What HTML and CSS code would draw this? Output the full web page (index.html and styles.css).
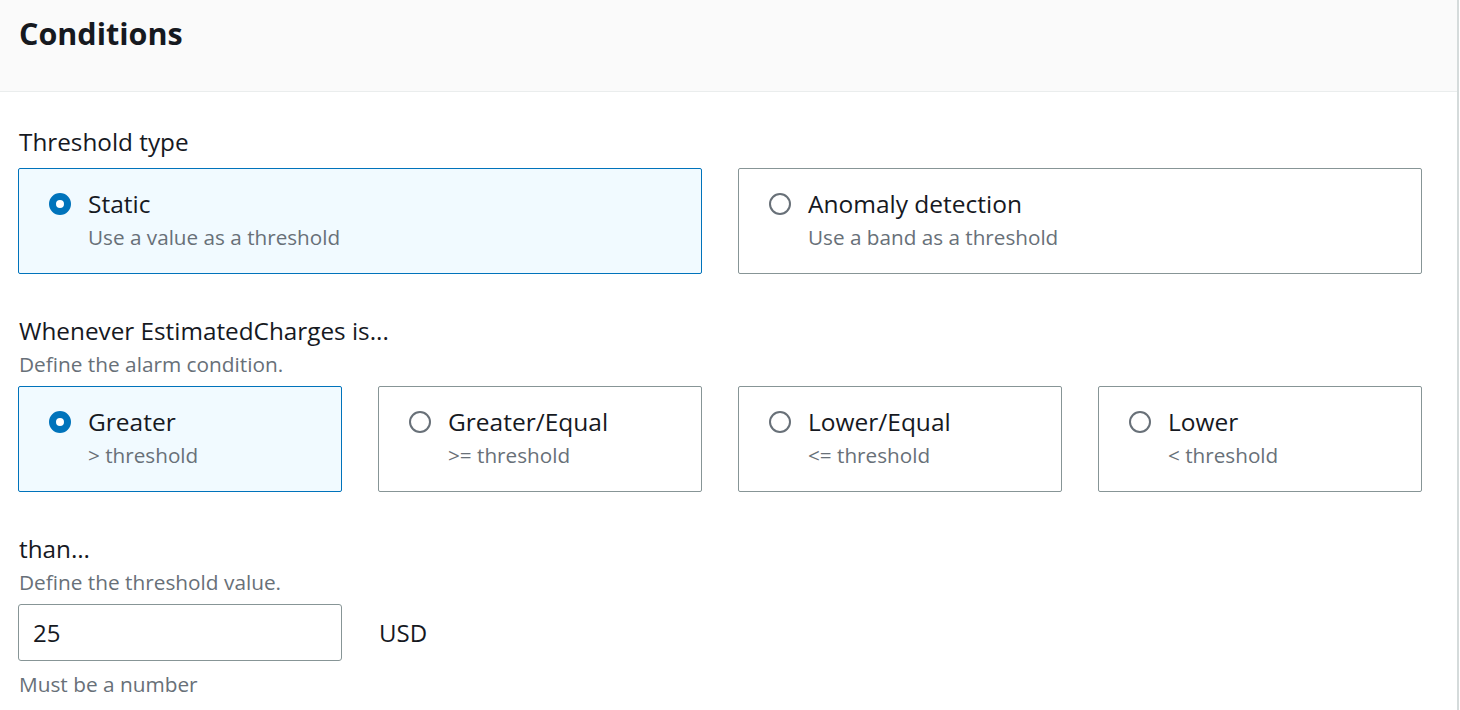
FILE: index.html
```html
<!DOCTYPE html>
<html>
<head>
<meta charset="utf-8">
<link rel="stylesheet" href="styles.css">
</head>
<body>
<div class="panel">
  <div class="header"><h2 class="title">Conditions</h2></div>
  <div class="content">
    <div class="field field-type">
      <div class="label">Threshold type</div>
      <div class="tiles two">
        <div class="tile selected">
          <span class="radio checked"></span>
          <div class="tile-text"><div class="tile-title">Static</div><div class="tile-desc">Use a value as a threshold</div></div>
        </div>
        <div class="tile">
          <span class="radio"></span>
          <div class="tile-text"><div class="tile-title">Anomaly detection</div><div class="tile-desc">Use a band as a threshold</div></div>
        </div>
      </div>
    </div>
    <div class="field field-cond">
      <div class="label">Whenever EstimatedCharges is...</div>
      <div class="desc">Define the alarm condition.</div>
      <div class="tiles four">
        <div class="tile selected">
          <span class="radio checked"></span>
          <div class="tile-text"><div class="tile-title">Greater</div><div class="tile-desc">&gt; threshold</div></div>
        </div>
        <div class="tile">
          <span class="radio"></span>
          <div class="tile-text"><div class="tile-title">Greater/Equal</div><div class="tile-desc">&gt;= threshold</div></div>
        </div>
        <div class="tile">
          <span class="radio"></span>
          <div class="tile-text"><div class="tile-title">Lower/Equal</div><div class="tile-desc">&lt;= threshold</div></div>
        </div>
        <div class="tile">
          <span class="radio"></span>
          <div class="tile-text"><div class="tile-title">Lower</div><div class="tile-desc">&lt; threshold</div></div>
        </div>
      </div>
    </div>
    <div class="field field-than">
      <div class="label">than…</div>
      <div class="desc desc-than">Define the threshold value.</div>
      <div class="input-row">
        <div class="input">25</div>
        <div class="unit">USD</div>
      </div>
      <div class="hint">Must be a number</div>
    </div>
  </div>
</div>
</body>
</html>
```

FILE: styles.css
```css
html, body {
  margin: 0;
  padding: 0;
  background: #ffffff;
}
body {
  font-family: "Open Sans", "Noto Sans", sans-serif;
  color: #16191f;
}
.panel {
  width: 1457px;
  height: 710px;
  border-right: 2px solid #d5dbdb;
  overflow: hidden;
}
.header {
  height: 92px;
  box-sizing: border-box;
  background: #fafafa;
  border-bottom: 1px solid #eaeded;
  padding: 13px 19px 0;
}
.title {
  margin: 0;
  font-size: 30.5px;
  line-height: 40px;
  font-weight: 700;
}
.content {
  padding: 0 35px 0 18px;
}
.label {
  font-size: 24.3px;
  line-height: 34px;
  padding-left: 1px;
}
.desc {
  font-size: 20.8px;
  line-height: 32px;
  color: #687078;
  padding-left: 1px;
}
.field-type { padding-top: 33px; }
.field-type .label { margin-bottom: 9px; }
.field-cond { padding-top: 40px; }
.field-cond .desc { margin-bottom: 6px; }
.tiles {
  display: grid;
  gap: 36px;
}
.tiles.two { grid-template-columns: 1fr 1fr; }
.tiles.four { grid-template-columns: repeat(4, 1fr); }
.tile {
  height: 106px;
  box-sizing: border-box;
  border: 1px solid #879596;
  border-radius: 2px;
  background: #ffffff;
  display: flex;
  align-items: flex-start;
  padding: 20px 20px 0 30px;
}
.tile.selected {
  border-color: #0073bb;
  background: #f1faff;
}
.radio {
  width: 22px;
  height: 22px;
  box-sizing: border-box;
  border-radius: 50%;
  border: 2px solid #687078;
  background: #fff;
  flex: none;
  margin-top: 4px;
  margin-right: 17px;
}
.radio.checked {
  border: 7px solid #0073bb;
  background: #ffffff;
}
.tile-title {
  font-size: 24.5px;
  line-height: 30px;
  color: #16191f;
}
.tile-desc {
  font-size: 20.7px;
  line-height: 30px;
  margin-top: 3px;
  color: #687078;
}
.field-than { padding-top: 40px; }
.desc-than { margin-bottom: 6px; }
.input-row {
  display: flex;
  align-items: center;
}
.input {
  width: 324px;
  height: 57px;
  box-sizing: border-box;
  border: 1px solid #879596;
  border-radius: 3px;
  padding: 0 14px;
  display: flex;
  align-items: center;
  font-size: 24px;
}
.unit {
  margin-left: 37px;
  font-size: 24px;
}
.hint {
  margin-top: 8px;
  font-size: 20.8px;
  line-height: 30px;
  color: #687078;
  padding-left: 1px;
}
```
